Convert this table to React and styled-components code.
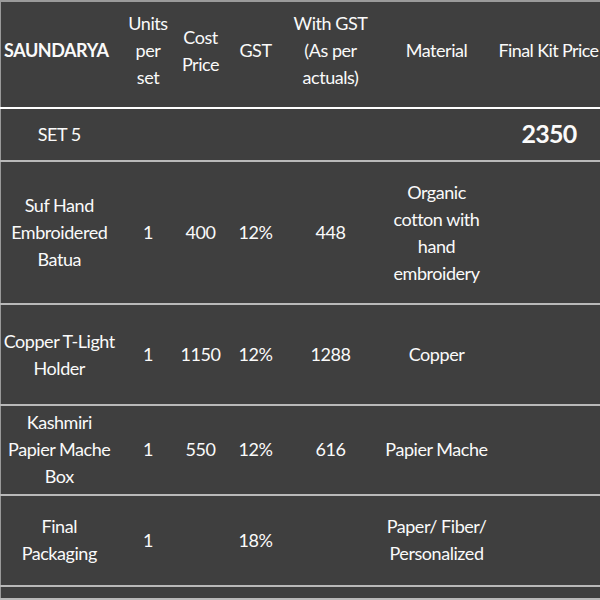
import React from 'react';
import styled, { createGlobalStyle } from 'styled-components';

const GlobalStyle = createGlobalStyle`
  html, body {
    margin: 0;
    padding: 0;
    background: #3f3f3f;
    overflow: hidden;
  }
`;

const Sheet = styled.table`
  width: 600px;
  height: 600px;
  border-collapse: collapse;
  table-layout: fixed;
  background: #3f3f3f;
  color: #fafafa;
  font-family: Lato, "Liberation Sans", sans-serif;
  font-size: 18px;
  line-height: 27px;
  letter-spacing: -0.45px;
  border-left: 1px solid #9a9a9a;
  border-top: 2px solid #9a9a9a;
`;

const Row = styled.tr`
  height: ${(p) => p.h}px;
  border-bottom: 2px solid ${(p) => (p.strong ? '#ffffff' : '#b9b9b9')};
`;

const Cell = styled.td`
  padding: 0 0 0 ${(p) => (p.align === 'left' ? '3px' : '0')};
  text-align: ${(p) => p.align || 'center'};
  vertical-align: middle;
  white-space: pre;
  font-weight: ${(p) => (p.bold ? 700 : 400)};
  overflow: visible;
`;

const HeadCell = styled(Cell)`
  padding-bottom: 8px;
`;

/* header text wider than its column: spills to the left, as in the sheet */
const Spill = styled.span`
  display: block;
  margin-left: -24px;
  padding-right: 2px;
  text-align: right;
  letter-spacing: -0.6px;
`;

const Total = styled.span`
  font-size: 25px;
  font-weight: 700;
  letter-spacing: -0.8px;
  margin-right: 3px;
`;

const widths = [117, 61, 44, 66, 84, 128, 100];

const items = [
  { h: 140, name: 'Suf Hand\nEmbroidered\nBatua', units: '1', cost: '400', gst: '12%', with: '448', material: 'Organic\ncotton with\nhand\nembroidery' },
  { h: 99, name: 'Copper T-Light\nHolder', units: '1', cost: '1150', gst: '12%', with: '1288', material: 'Copper' },
  { h: 88, name: 'Kashmiri\nPapier Mache\nBox', units: '1', cost: '550', gst: '12%', with: '616', material: 'Papier Mache' },
  { h: 89, name: 'Final\nPackaging', units: '1', cost: '', gst: '18%', with: '', material: 'Paper/ Fiber/\nPersonalized' },
];

export default function App() {
  return (
    <>
      <GlobalStyle />
      <Sheet>
        <colgroup>
          {widths.map((w, i) => (
            <col key={i} style={{ width: w }} />
          ))}
        </colgroup>
        <tbody>
          <Row h={105} strong>
            <HeadCell align="left" bold>SAUNDARYA</HeadCell>
            <HeadCell>{'Units\nper\nset'}</HeadCell>
            <HeadCell>{'Cost\nPrice'}</HeadCell>
            <HeadCell>GST</HeadCell>
            <HeadCell>{'With GST\n(As per\nactuals)'}</HeadCell>
            <HeadCell>Material</HeadCell>
            <HeadCell><Spill>Final Kit Price</Spill></HeadCell>
          </Row>
          <Row h={52}>
            <Cell>SET 5</Cell>
            <Cell />
            <Cell />
            <Cell />
            <Cell />
            <Cell />
            <Cell><Total>2350</Total></Cell>
          </Row>
          {items.map((it, i) => (
            <Row key={i} h={it.h}>
              <Cell>{it.name}</Cell>
              <Cell>{it.units}</Cell>
              <Cell>{it.cost}</Cell>
              <Cell>{it.gst}</Cell>
              <Cell>{it.with}</Cell>
              <Cell>{it.material}</Cell>
              <Cell />
            </Row>
          ))}
          <Row h={13}>
            <Cell />
            <Cell />
            <Cell />
            <Cell />
            <Cell />
            <Cell />
            <Cell />
          </Row>
        </tbody>
      </Sheet>
    </>
  );
}
